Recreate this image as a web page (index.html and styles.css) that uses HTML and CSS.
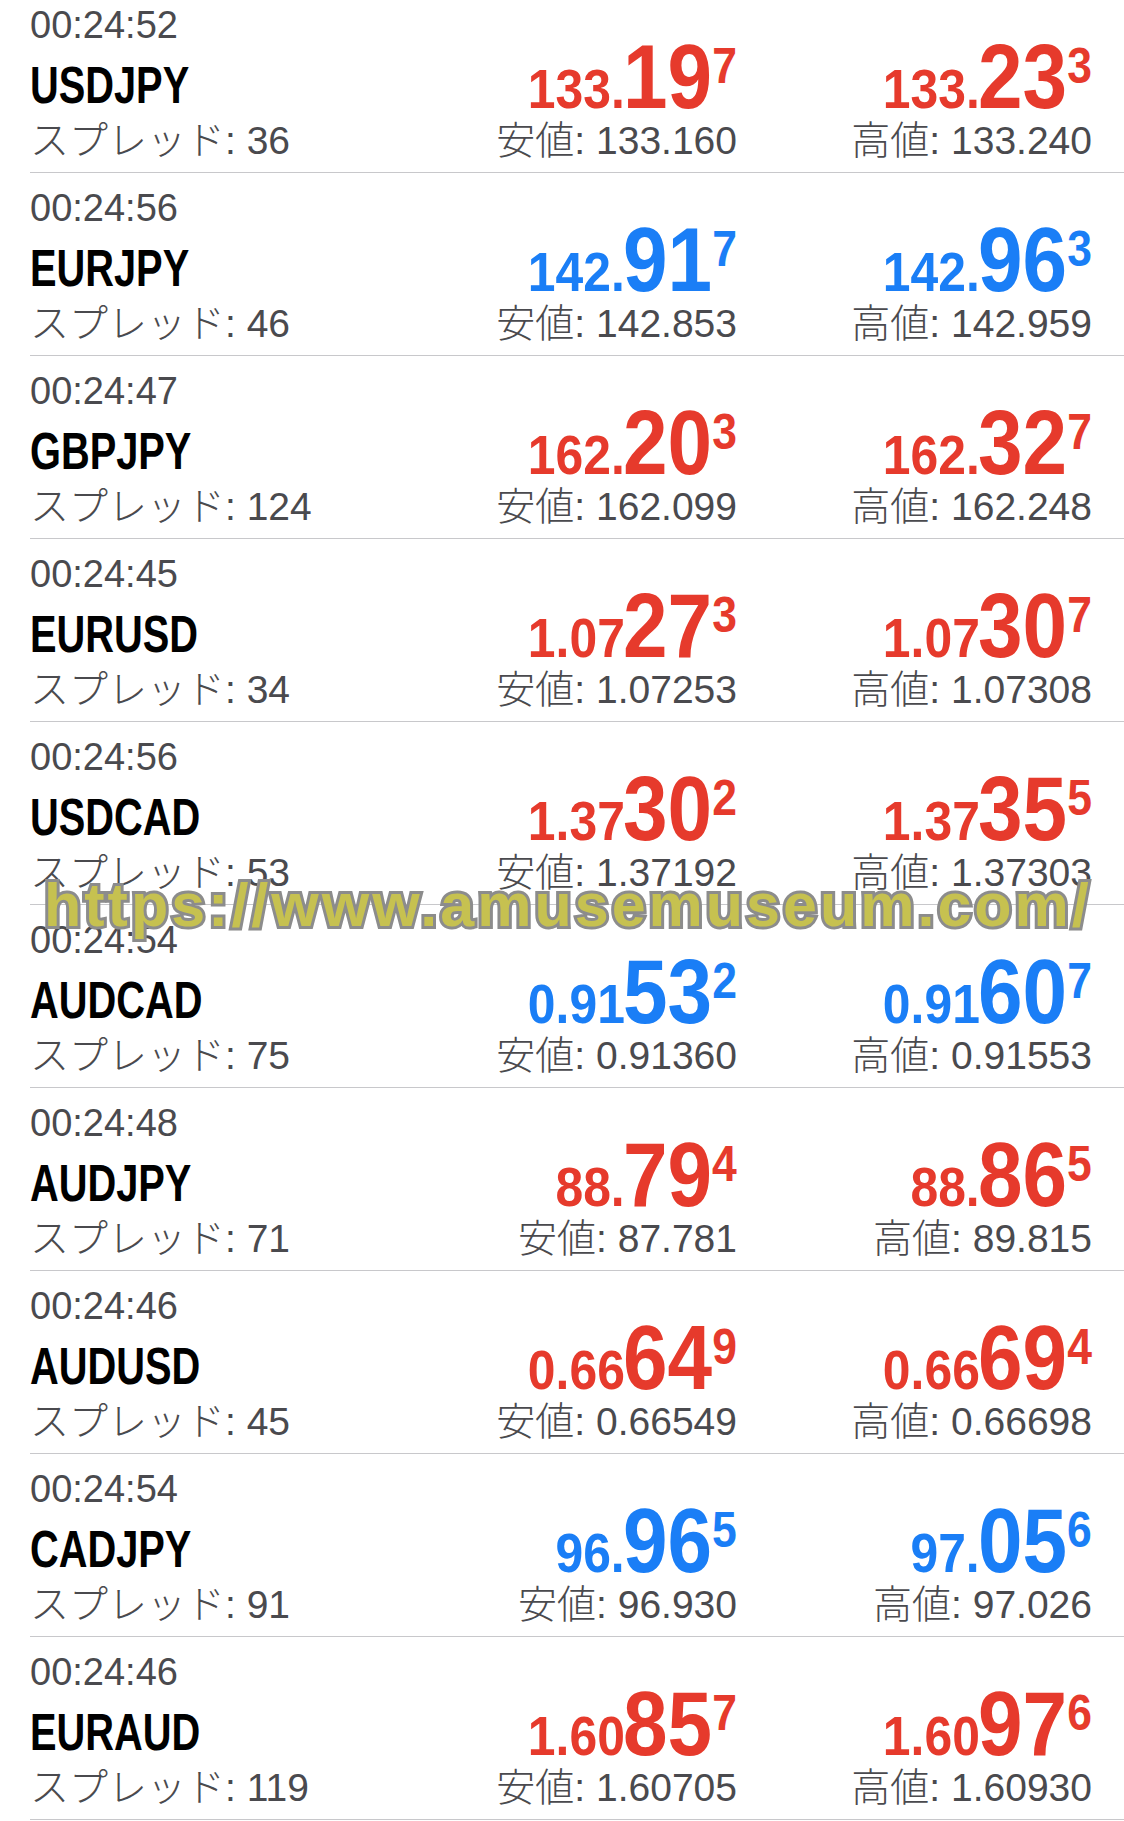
FILE: index.html
```html
<!DOCTYPE html>
<html lang="ja">
<head>
<meta charset="utf-8">
<title>気配値</title>
<link rel="stylesheet" href="styles.css">
</head>
<body>
<div class="screen">
  <ul class="quotes">
    <li class="quote">
      <div class="time">00:24:52</div>
      <div class="symbol"><span class="sym-text">USDJPY</span></div>
      <div class="spread">スプレッド: 36</div>
      <div class="price bid red"><span class="num"><span class="p-s">133.</span><span class="p-b">19</span><span class="p-x">7</span></span></div>
      <div class="range low">安値: 133.160</div>
      <div class="price ask red"><span class="num"><span class="p-s">133.</span><span class="p-b">23</span><span class="p-x">3</span></span></div>
      <div class="range high">高値: 133.240</div>
    </li>
    <li class="quote">
      <div class="time">00:24:56</div>
      <div class="symbol"><span class="sym-text">EURJPY</span></div>
      <div class="spread">スプレッド: 46</div>
      <div class="price bid blue"><span class="num"><span class="p-s">142.</span><span class="p-b">91</span><span class="p-x">7</span></span></div>
      <div class="range low">安値: 142.853</div>
      <div class="price ask blue"><span class="num"><span class="p-s">142.</span><span class="p-b">96</span><span class="p-x">3</span></span></div>
      <div class="range high">高値: 142.959</div>
    </li>
    <li class="quote">
      <div class="time">00:24:47</div>
      <div class="symbol"><span class="sym-text">GBPJPY</span></div>
      <div class="spread">スプレッド: 124</div>
      <div class="price bid red"><span class="num"><span class="p-s">162.</span><span class="p-b">20</span><span class="p-x">3</span></span></div>
      <div class="range low">安値: 162.099</div>
      <div class="price ask red"><span class="num"><span class="p-s">162.</span><span class="p-b">32</span><span class="p-x">7</span></span></div>
      <div class="range high">高値: 162.248</div>
    </li>
    <li class="quote">
      <div class="time">00:24:45</div>
      <div class="symbol"><span class="sym-text">EURUSD</span></div>
      <div class="spread">スプレッド: 34</div>
      <div class="price bid red"><span class="num"><span class="p-s">1.07</span><span class="p-b">27</span><span class="p-x">3</span></span></div>
      <div class="range low">安値: 1.07253</div>
      <div class="price ask red"><span class="num"><span class="p-s">1.07</span><span class="p-b">30</span><span class="p-x">7</span></span></div>
      <div class="range high">高値: 1.07308</div>
    </li>
    <li class="quote">
      <div class="time">00:24:56</div>
      <div class="symbol"><span class="sym-text">USDCAD</span></div>
      <div class="spread">スプレッド: 53</div>
      <div class="price bid red"><span class="num"><span class="p-s">1.37</span><span class="p-b">30</span><span class="p-x">2</span></span></div>
      <div class="range low">安値: 1.37192</div>
      <div class="price ask red"><span class="num"><span class="p-s">1.37</span><span class="p-b">35</span><span class="p-x">5</span></span></div>
      <div class="range high">高値: 1.37303</div>
    </li>
    <li class="quote">
      <div class="time">00:24:54</div>
      <div class="symbol"><span class="sym-text">AUDCAD</span></div>
      <div class="spread">スプレッド: 75</div>
      <div class="price bid blue"><span class="num"><span class="p-s">0.91</span><span class="p-b">53</span><span class="p-x">2</span></span></div>
      <div class="range low">安値: 0.91360</div>
      <div class="price ask blue"><span class="num"><span class="p-s">0.91</span><span class="p-b">60</span><span class="p-x">7</span></span></div>
      <div class="range high">高値: 0.91553</div>
    </li>
    <li class="quote">
      <div class="time">00:24:48</div>
      <div class="symbol"><span class="sym-text">AUDJPY</span></div>
      <div class="spread">スプレッド: 71</div>
      <div class="price bid red"><span class="num"><span class="p-s">88.</span><span class="p-b">79</span><span class="p-x">4</span></span></div>
      <div class="range low">安値: 87.781</div>
      <div class="price ask red"><span class="num"><span class="p-s">88.</span><span class="p-b">86</span><span class="p-x">5</span></span></div>
      <div class="range high">高値: 89.815</div>
    </li>
    <li class="quote">
      <div class="time">00:24:46</div>
      <div class="symbol"><span class="sym-text">AUDUSD</span></div>
      <div class="spread">スプレッド: 45</div>
      <div class="price bid red"><span class="num"><span class="p-s">0.66</span><span class="p-b">64</span><span class="p-x">9</span></span></div>
      <div class="range low">安値: 0.66549</div>
      <div class="price ask red"><span class="num"><span class="p-s">0.66</span><span class="p-b">69</span><span class="p-x">4</span></span></div>
      <div class="range high">高値: 0.66698</div>
    </li>
    <li class="quote">
      <div class="time">00:24:54</div>
      <div class="symbol"><span class="sym-text">CADJPY</span></div>
      <div class="spread">スプレッド: 91</div>
      <div class="price bid blue"><span class="num"><span class="p-s">96.</span><span class="p-b">96</span><span class="p-x">5</span></span></div>
      <div class="range low">安値: 96.930</div>
      <div class="price ask blue"><span class="num"><span class="p-s">97.</span><span class="p-b">05</span><span class="p-x">6</span></span></div>
      <div class="range high">高値: 97.026</div>
    </li>
    <li class="quote">
      <div class="time">00:24:46</div>
      <div class="symbol"><span class="sym-text">EURAUD</span></div>
      <div class="spread">スプレッド: 119</div>
      <div class="price bid red"><span class="num"><span class="p-s">1.60</span><span class="p-b">85</span><span class="p-x">7</span></span></div>
      <div class="range low">安値: 1.60705</div>
      <div class="price ask red"><span class="num"><span class="p-s">1.60</span><span class="p-b">97</span><span class="p-x">6</span></span></div>
      <div class="range high">高値: 1.60930</div>
    </li>
  </ul>
  <div class="watermark">https://www.amusemuseum.com/</div>
</div>
</body>
</html>
```

FILE: styles.css
```css
html, body {
  margin: 0;
  padding: 0;
  background: #ffffff;
}

body {
  width: 1124px;
  height: 1821px;
  overflow: hidden;
  font-family: "Liberation Sans", "Noto Sans CJK JP", sans-serif;
}

.screen {
  position: relative;
  width: 1124px;
  height: 1821px;
  overflow: hidden;
}

.quotes {
  list-style: none;
  margin: -10px 0 0 30px;
  padding: 0;
}

.quote {
  display: grid;
  grid-template-columns: 1fr 355px 355px;
  grid-template-rows: 50px 72px 38px;
  grid-template-areas:
    "time . ."
    "symbol bid ask"
    "spread low high";
  padding: 10px 32px 12px 0;
  border-bottom: 1px solid #c8c8cb;
}

.time {
  grid-area: time;
  font-size: 38px;
  line-height: 50px;
  color: #4a4a4e;
  white-space: nowrap;
}

.symbol {
  grid-area: symbol;
  font-family: "Liberation Sans", sans-serif;
  font-weight: 700;
  font-size: 51px;
  line-height: 72px;
  color: #000000;
  white-space: nowrap;
}

.sym-text {
  display: inline-block;
  transform: scaleX(0.78);
  transform-origin: left center;
}

.spread,
.range {
  font-size: 39px;
  line-height: 38px;
  font-weight: 300;
  color: #4a4a4e;
  white-space: nowrap;
}

.spread { grid-area: spread; }
.low { grid-area: low; text-align: right; }
.high { grid-area: high; text-align: right; }

.price {
  font-family: "Liberation Sans", sans-serif;
  font-weight: 700;
  font-size: 50px;
  line-height: 82px;
  text-align: right;
  white-space: nowrap;
}

.num {
  display: inline-block;
  transform: scaleX(0.89);
  transform-origin: right center;
}

.bid { grid-area: bid; }
.ask { grid-area: ask; }

.red { color: #e63a2c; }
.blue { color: #1a7ef6; }

.p-s {
  font-size: 56px;
  line-height: 0;
}

.p-b {
  font-size: 90px;
  line-height: 0;
  margin-left: -2px;
}

.p-x {
  font-size: 50px;
  line-height: 0;
  vertical-align: 25px;
}

.watermark {
  position: absolute;
  left: 44px;
  top: 875px;
  font-family: "Liberation Sans", sans-serif;
  font-weight: 700;
  font-size: 61px;
  line-height: 60px;
  letter-spacing: 3px;
  color: #c6c150;
  -webkit-text-stroke: 6px #8c8c8c;
  paint-order: stroke fill;
  white-space: nowrap;
}
```
